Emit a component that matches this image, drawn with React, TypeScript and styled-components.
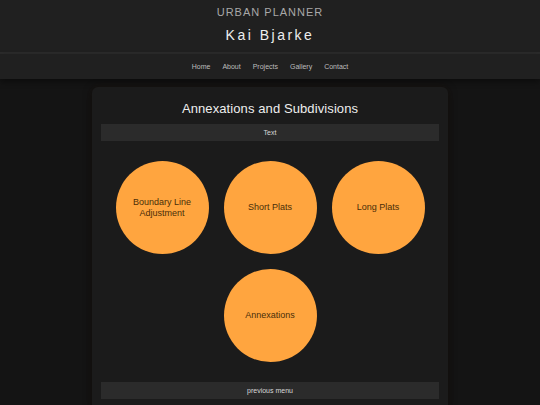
import React from 'react'
import styled, { createGlobalStyle } from 'styled-components'

const GlobalStyle = createGlobalStyle`
  html, body {
    margin: 0;
    padding: 0;
    background: #141414;
    font-family: "Liberation Sans", Arial, sans-serif;
  }
`

const Header = styled.header`
  background: #202020;
  text-align: center;
  padding: 6px 0 8px;
  border-bottom: 2px solid #2b2b2b;
`

const Kicker = styled.div`
  color: #a8a8a8;
  font-size: 11px;
  letter-spacing: 1px;
  line-height: 13px;
`

const Name = styled.h1`
  margin: 8px 0 0;
  color: #eeeeee;
  font-size: 14px;
  font-weight: 400;
  letter-spacing: 2.5px;
  line-height: 17px;
`

const Nav = styled.nav`
  background: #202020;
  display: flex;
  justify-content: center;
  gap: 12px;
  height: 25px;
  align-items: center;
  box-shadow: 0 3px 6px rgba(0, 0, 0, 0.4);
`

const NavLink = styled.a`
  color: #bdbdbd;
  font-size: 7px;
  text-decoration: none;
`

const Card = styled.main`
  width: 338px;
  margin: 8px auto 0;
  padding: 9px 9px 12px;
  background: #1b1b1b;
  border-radius: 6px;
  box-shadow: 0 0 8px rgba(255, 140, 0, 0.04), 0 2px 8px rgba(0, 0, 0, 0.5);
`

const Title = styled.h2`
  margin: 5px 0 7px;
  color: #eeeeee;
  font-size: 13px;
  font-weight: 400;
  letter-spacing: 0.1px;
  text-align: center;
  line-height: 16px;
`

const Bar = styled.div`
  background: #2b2b2b;
  color: #d8d8d8;
  font-size: 7px;
  text-align: center;
  height: 17px;
  line-height: 17px;
`

const Circles = styled.div`
  display: flex;
  flex-wrap: wrap;
  justify-content: center;
  gap: 15px;
  margin: 20px 0;
`

const Circle = styled.div`
  width: 93px;
  height: 93px;
  border-radius: 50%;
  background: #ffa53f;
  color: #4a2e08;
  font-size: 9px;
  line-height: 11px;
  display: flex;
  align-items: center;
  justify-content: center;
  text-align: center;
  padding: 0 8px;
  box-sizing: border-box;
`

const items = ['Boundary Line Adjustment', 'Short Plats', 'Long Plats', 'Annexations']

export default function App() {
  return (
    <>
      <GlobalStyle />
      <Header>
        <Kicker>URBAN PLANNER</Kicker>
        <Name>Kai Bjarke</Name>
      </Header>
      <Nav>
        {['Home', 'About', 'Projects', 'Gallery', 'Contact'].map((l) => (
          <NavLink key={l} href="#">{l}</NavLink>
        ))}
      </Nav>
      <Card>
        <Title>Annexations and Subdivisions</Title>
        <Bar>Text</Bar>
        <Circles>
          {items.map((i) => (
            <Circle key={i}>{i === 'Boundary Line Adjustment' ? <span>Boundary Line<br />Adjustment</span> : i}</Circle>
          ))}
        </Circles>
        <Bar>previous menu</Bar>
      </Card>
    </>
  )
}
